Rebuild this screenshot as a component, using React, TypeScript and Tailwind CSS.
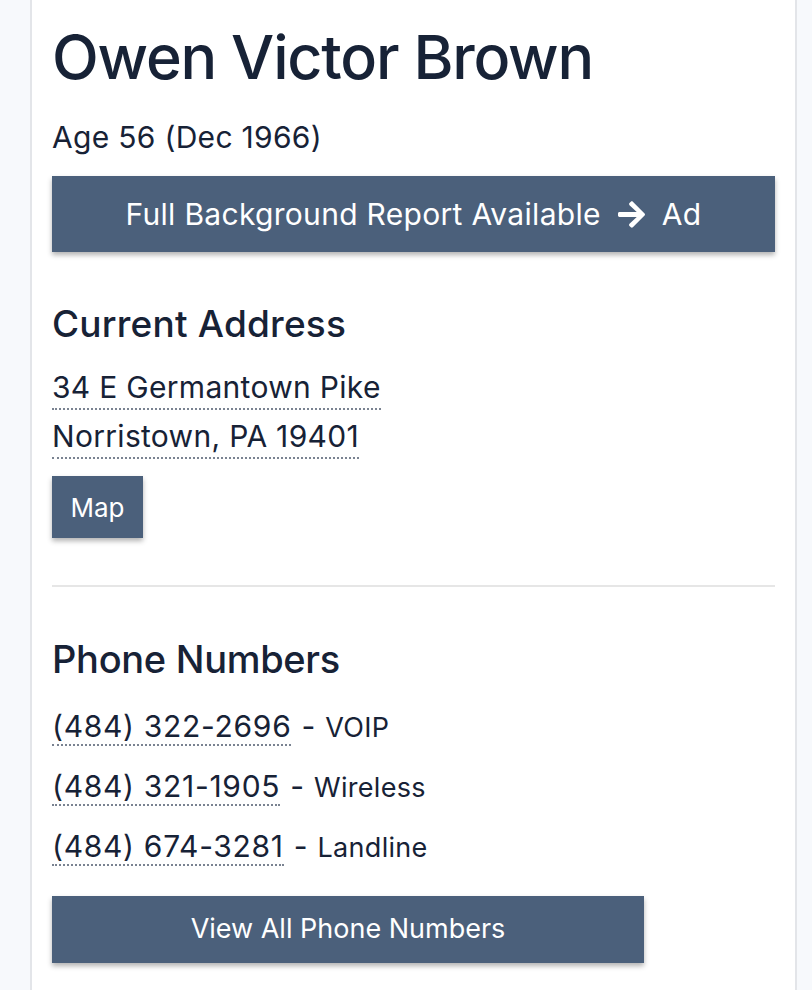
import { FaArrowRight } from "react-icons/fa";

const phones = [
  { number: "(484) 322-2696", kind: "VOIP" },
  { number: "(484) 321-1905", kind: "Wireless" },
  { number: "(484) 674-3281", kind: "Landline" },
];

export default function App() {
  return (
    <div className="min-h-screen bg-[#f7f9fc] text-[#172236]" style={{ fontFamily: "Inter, 'Noto Sans', sans-serif" }}>
      <div className="ml-[30px] min-h-[990px] w-[767px] border-x-2 border-[#e3e5e9] bg-white px-5">
        <h1 className="pt-[27px] text-[61px] font-medium leading-none tracking-[-1.2px]">Owen Victor Brown</h1>
        <p className="mt-[34px] text-[30px] leading-none tracking-[0.3px]">Age 56 (Dec 1966)</p>

        <button
          type="button"
          className="mt-[24px] flex h-[76px] w-full items-center justify-center gap-[17px] bg-[#4b607b] text-[30px] tracking-[0.3px] text-white shadow-[0_3px_5px_rgba(0,0,0,0.3)]"
        >
          <span>Full Background Report Available</span>
          <FaArrowRight className="h-[31px] w-[27px]" />
          <span>Ad</span>
        </button>

        <h2 className="mt-[53px] text-[37px] font-medium leading-none tracking-[0.2px]">Current Address</h2>
        <div className="mt-[24px] flex flex-col items-start gap-[5px] text-[30px] leading-[42px] tracking-[0.3px]">
          <span className="border-b-2 border-dotted border-[#7a8391]">34 E Germantown Pike</span>
          <span className="border-b-2 border-dotted border-[#7a8391]">Norristown, PA 19401</span>
        </div>
        <button
          type="button"
          className="mt-[17px] h-[62px] w-[91px] bg-[#4b607b] text-[26px] text-white shadow-[0_3px_5px_rgba(0,0,0,0.3)]"
        >
          Map
        </button>

        <hr className="mt-[47px] border-t-2 border-[#e6e6e6]" />

        <h2 className="mt-[53px] text-[38px] font-medium leading-none tracking-[-0.3px]">Phone Numbers</h2>
        <div className="mt-[30px] flex flex-col gap-[22px]">
          {phones.map((p) => (
            <div key={p.number} className="flex items-baseline text-[30px] leading-[36px]">
              <span className="border-b-2 border-dotted border-[#7a8391] tracking-[0.7px]">{p.number}</span>
              <span className="ml-[10px]">-</span>
              <span className="ml-[10px] text-[27px] tracking-[0.3px]">{p.kind}</span>
            </div>
          ))}
        </div>

        <button
          type="button"
          className="mt-[30px] h-[67px] w-[592px] bg-[#4b607b] text-[27px] text-white shadow-[0_3px_5px_rgba(0,0,0,0.3)]"
        >
          View All Phone Numbers
        </button>
      </div>
    </div>
  );
}
